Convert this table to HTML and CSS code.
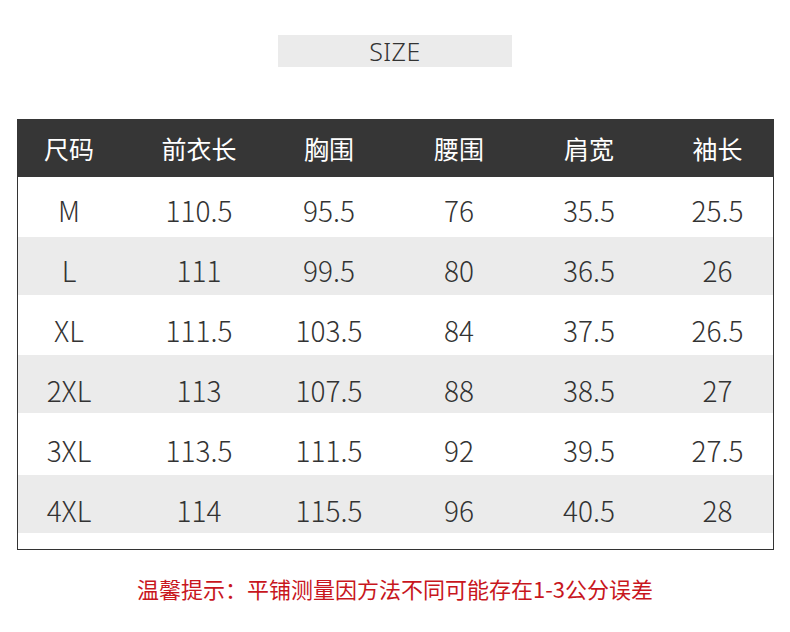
FILE: index.html
```html
<!DOCTYPE html>
<html lang="zh">
<head>
<meta charset="utf-8">
<link rel="stylesheet" href="styles.css">
</head>
<body>
<div class="page">
  <div class="title-wrap"><div class="title">SIZE</div></div>
  <div class="table">
    <div class="row head">
      <div class="c c1">尺码</div><div class="c">前衣长</div><div class="c">胸围</div><div class="c">腰围</div><div class="c">肩宽</div><div class="c c6">袖长</div>
    </div>
    <div class="row body r-a">
      <div class="c c1">M</div><div class="c">110.5</div><div class="c">95.5</div><div class="c">76</div><div class="c">35.5</div><div class="c c6">25.5</div>
    </div>
    <div class="row body r-b alt d1">
      <div class="c c1">L</div><div class="c">111</div><div class="c">99.5</div><div class="c">80</div><div class="c">36.5</div><div class="c c6">26</div>
    </div>
    <div class="row body r-a d2">
      <div class="c c1">XL</div><div class="c">111.5</div><div class="c">103.5</div><div class="c">84</div><div class="c">37.5</div><div class="c c6">26.5</div>
    </div>
    <div class="row body r-b alt d3">
      <div class="c c1">2XL</div><div class="c">113</div><div class="c">107.5</div><div class="c">88</div><div class="c">38.5</div><div class="c c6">27</div>
    </div>
    <div class="row body r-c d3">
      <div class="c c1">3XL</div><div class="c">113.5</div><div class="c">111.5</div><div class="c">92</div><div class="c">39.5</div><div class="c c6">27.5</div>
    </div>
    <div class="row body r-b alt d3">
      <div class="c c1">4XL</div><div class="c">114</div><div class="c">115.5</div><div class="c">96</div><div class="c">40.5</div><div class="c c6">28</div>
    </div>
    <div class="tail"></div>
  </div>
  <div class="note">温馨提示：平铺测量因方法不同可能存在1-3公分误差</div>
</div>
</body>
</html>
```

FILE: styles.css
```css
html, body {
  margin: 0;
  padding: 0;
  background: #ffffff;
}
body {
  width: 790px;
  height: 632px;
  overflow: hidden;
  font-family: "Noto Sans CJK SC", "Noto Sans", sans-serif;
  color: #333333;
}
.page {
  padding-top: 35px;
}
.title-wrap {
  display: flex;
  justify-content: flex-start;
  padding-left: 278px;
}
.title {
  width: 234px;
  height: 32px;
  background: #ebebeb;
  display: flex;
  align-items: center;
  justify-content: center;
  font-family: "Noto Sans", "Noto Sans CJK SC", sans-serif;
  font-size: 25px;
  font-weight: 300;
  color: #333333;
  letter-spacing: 0.5px;
}
.table {
  margin-top: 52px;
  margin-left: 17px;
  border: 1px solid #333333;
  border-top: none;
  box-sizing: border-box;
  width: 757px;
}
.row {
  display: grid;
  grid-template-columns: 116px 130px 130px 130px 130px 1fr;
  align-items: center;
  color: #333333;
}
.c {
  text-align: center;
  line-height: 1;
}
.c1 {
  padding-right: 14px;
}
.c6 {
  padding-left: 8px;
}
.body {
  font-size: 28px;
  font-weight: 300;
}
.body .c {
  padding-top: 6px;
}
.body.d1 .c { padding-top: 8px; }
.body.d2 .c { padding-top: 10px; }
.body.d3 .c { padding-top: 12px; }
.head {
  height: 58px;
  background: #363636;
  color: #ffffff;
  font-size: 25px;
  font-weight: 400;
  margin-left: -1px;
  margin-right: -1px;
  padding-left: 1px;
  padding-right: 1px;
}
.r-a { height: 60px; }
.r-b { height: 58px; }
.r-c { height: 62px; }
.alt { background: #ebebeb; }
.tail { height: 16px; }
.note {
  margin-top: 27px;
  padding-left: 137px;
  font-size: 22px;
  color: #c8161d;
  line-height: 1;
}
```
